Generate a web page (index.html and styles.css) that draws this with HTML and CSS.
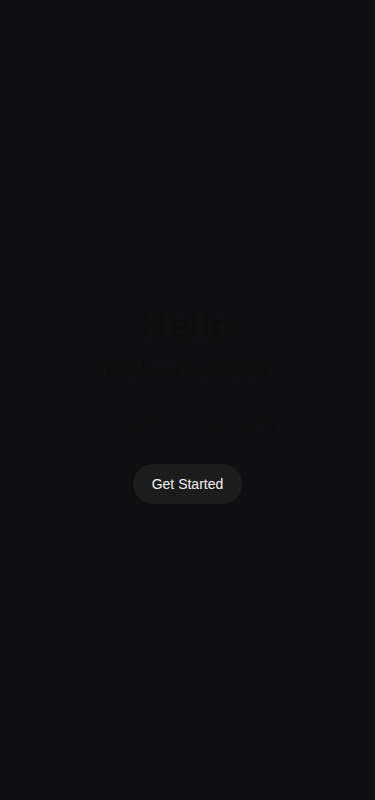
FILE: index.html
```html
<!DOCTYPE html>
<html lang="en">
<head>
<meta charset="utf-8">
<meta name="viewport" content="width=device-width, initial-scale=1">
<title>Welcome</title>
<link rel="stylesheet" href="styles.css">
</head>
<body>
<main class="screen">
  <section class="hero">
    <h1 class="title">Hello</h1>
    <h2 class="subtitle">Welcome back</h2>
    <p class="lead">Let's get you set up quickly</p>
    <button class="cta" type="button">Get Started</button>
  </section>
</main>
</body>
</html>
```

FILE: styles.css
```css
* { box-sizing: border-box; }
html, body {
  margin: 0;
  padding: 0;
  background: #0e0f11;
}
body {
  font-family: "Liberation Sans", Arial, sans-serif;
}
.screen {
  min-height: 800px;
  display: flex;
  align-items: center;
  justify-content: center;
}
.hero {
  display: flex;
  flex-direction: column;
  align-items: center;
  text-align: center;
  padding-top: 8px;
}
.title {
  margin: 0;
  font-size: 38px;
  line-height: 44px;
  font-weight: 700;
  color: #0d0d0d;
}
.subtitle {
  margin: 6px 0 0;
  font-size: 24px;
  line-height: 32px;
  font-weight: 700;
  color: #0d0d0d;
}
.lead {
  margin: 26px 0 0;
  font-size: 15px;
  line-height: 22px;
  color: #0d0d0d;
}
.cta {
  margin-top: 30px;
  height: 40px;
  padding: 0 19px;
  border: none;
  border-radius: 20px;
  background: #1c1c1d;
  color: #f2f2f2;
  font-family: "Liberation Sans", Arial, sans-serif;
  font-size: 14px;
}
```
